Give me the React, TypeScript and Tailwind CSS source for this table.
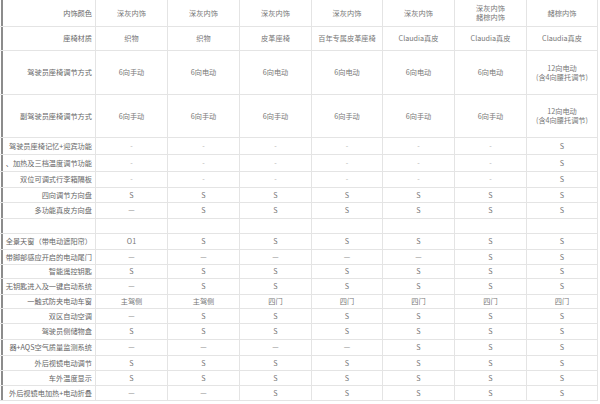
const cols = ["w-[96px]", "w-[72px]", "w-[72px]", "w-[72px]", "w-[71px]", "w-[72px]", "w-[72px]", "w-[71px]"];

type Row = { h: string; label: string; cells: string[] };

const lumbar = "12向电动\n(含4向腰托调节)";

const rows: Row[] = [
  { h: "h-[27px]", label: "内饰颜色", cells: ["深灰内饰", "深灰内饰", "深灰内饰", "深灰内饰", "深灰内饰", "深灰内饰\n赭棕内饰", "赭棕内饰"] },
  { h: "h-[24px]", label: "座椅材质", cells: ["织物", "织物", "皮革座椅", "百年专属皮革座椅", "Claudia真皮", "Claudia真皮", "Claudia真皮"] },
  { h: "h-[44px]", label: "驾驶员座椅调节方式", cells: ["6向手动", "6向电动", "6向电动", "6向电动", "6向电动", "6向电动", lumbar] },
  { h: "h-[43px]", label: "副驾驶员座椅调节方式", cells: ["6向手动", "6向手动", "6向手动", "6向手动", "6向手动", "6向手动", lumbar] },
  { h: "h-[17px]", label: "驾驶员座椅记忆+迎宾功能", cells: ["-", "-", "-", "-", "-", "-", "S"] },
  { h: "h-[17px]", label: "、加热及三档温度调节功能", cells: ["-", "-", "-", "-", "-", "-", "S"] },
  { h: "h-[16px]", label: "双位可调式行李箱隔板", cells: ["-", "-", "-", "-", "-", "-", "S"] },
  { h: "h-[15px]", label: "四向调节方向盘", cells: ["S", "S", "S", "S", "S", "S", "S"] },
  { h: "h-[16px]", label: "多功能真皮方向盘", cells: ["—", "S", "S", "S", "S", "S", "S"] },
  { h: "h-[15px]", label: "", cells: ["", "", "", "", "", "", ""] },
  { h: "h-[16px]", label: "全景天窗（带电动遮阳帘）", cells: ["O1", "S", "S", "S", "S", "S", "S"] },
  { h: "h-[15px]", label: "带脚部感应开启的电动尾门", cells: ["—", "—", "—", "—", "—", "S", "S"] },
  { h: "h-[14px]", label: "智能遥控钥匙", cells: ["S", "S", "S", "S", "S", "S", "S"] },
  { h: "h-[16px]", label: "无钥匙进入及一键启动系统", cells: ["—", "S", "S", "S", "S", "S", "S"] },
  { h: "h-[14px]", label: "一触式防夹电动车窗", cells: ["主驾侧", "主驾侧", "四门", "四门", "四门", "四门", "四门"] },
  { h: "h-[15px]", label: "双区自动空调", cells: ["—", "S", "S", "S", "S", "S", "S"] },
  { h: "h-[16px]", label: "驾驶员侧储物盒", cells: ["S", "S", "S", "S", "S", "S", "S"] },
  { h: "h-[16px]", label: "器+AQS空气质量监测系统", cells: ["—", "—", "—", "—", "S", "S", "S"] },
  { h: "h-[15px]", label: "外后视镜电动调节", cells: ["S", "S", "S", "S", "S", "S", "S"] },
  { h: "h-[15px]", label: "车外温度显示", cells: ["S", "S", "S", "S", "S", "S", "S"] },
  { h: "h-[15px]", label: "外后视镜电加热+电动折叠", cells: ["—", "—", "S", "S", "S", "S", "S"] },
];

function Cell({ text, width }: { text: string; width: string }) {
  const lines = text.split("\n");
  return (
    <div
      className={`${width} flex shrink-0 flex-col items-center justify-center border-r border-b border-[#e4e4e4] text-center leading-[9px] ${
        text === "-" ? "text-[#b0b0b0]" : "text-[#777]"
      }`}
    >
      {lines.map((l, i) => (
        <span key={i} className="whitespace-nowrap">
          {l}
        </span>
      ))}
    </div>
  );
}

export default function App() {
  return (
    <div className="h-[404px] w-[600px] overflow-hidden bg-white font-['Noto_Sans_CJK_SC','Noto_Sans',sans-serif] text-[7.2px]">
      <div className="flex flex-col">
        {rows.map((r, i) => (
          <div key={i} className={`flex ${r.h}`}>
            <div className={`${cols[0]} flex shrink-0 border-r border-b border-[#e4e4e4] pl-[1px]`}>
              <div className="flex min-w-0 flex-1 items-center justify-end overflow-hidden border-l-2 border-[#8c8c8c] pr-[3px] text-[#666]">
                <span className="shrink-0 whitespace-nowrap">{r.label}</span>
              </div>
            </div>
            {r.cells.map((c, j) => (
              <Cell key={j} text={c} width={cols[j + 1]} />
            ))}
          </div>
        ))}
      </div>
    </div>
  );
}
